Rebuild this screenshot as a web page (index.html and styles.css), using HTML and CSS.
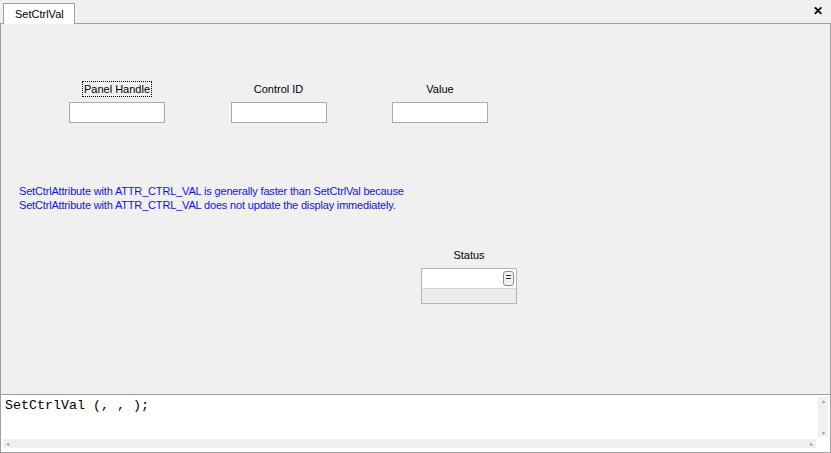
FILE: index.html
```html
<!DOCTYPE html>
<html lang="en">
<head>
    <meta charset="UTF-8">
    <title>SetCtrlVal</title>
    <link rel="stylesheet" href="styles.css">
</head>
<body>
    <div class="window">
        <div class="tabbar">
            <div class="tab">SetCtrlVal</div>
            <div class="close">&#x2715;</div>
        </div>

        <div class="panel">
            <div class="fields">
                <div class="field">
                    <span class="label focused">Panel Handle</span>
                    <div class="input"></div>
                </div>
                <div class="field">
                    <span class="label">Control ID</span>
                    <div class="input"></div>
                </div>
                <div class="field">
                    <span class="label">Value</span>
                    <div class="input"></div>
                </div>
            </div>

            <p class="note">SetCtrlAttribute with ATTR_CTRL_VAL is generally faster than SetCtrlVal because<br>SetCtrlAttribute with ATTR_CTRL_VAL does not update the display immediately.</p>

            <div class="status">
                <span class="label">Status</span>
                <div class="status-box">
                    <div class="status-top"><span class="eq">=</span></div>
                    <div class="status-bottom"></div>
                </div>
            </div>
        </div>

        <div class="editor">
            <div class="code">SetCtrlVal (, , );</div>
            <div class="vscroll"><span>&#9652;</span><span>&#9662;</span></div>
            <div class="hscroll"><span>&#9666;</span><span>&#9656;</span></div>
        </div>
    </div>
</body>
</html>
```

FILE: styles.css
```css
body { margin: 0; font-family: "Liberation Sans", Arial, sans-serif; font-size: 11px; color: #000; }
.window { width: 831px; height: 453px; display: flex; flex-direction: column; background: #f0f0f0; box-sizing: border-box; }

.tabbar { height: 23px; flex: none; display: flex; align-items: flex-end; border-bottom: 1px solid #a0a0a0; padding-left: 3px; position: relative; background: #f0f0f0; }
.tab { height: 20px; line-height: 20px; padding: 0 10px 0 11px; background: #fff; border: 1px solid #a0a0a0; border-bottom: none; margin-bottom: -1px; font-size: 11px; }
.close { position: absolute; right: 8px; top: 4px; font-size: 12px; font-weight: bold; line-height: 14px; }

.panel { flex: 1; border-left: 1px solid #a0a0a0; border-right: 1px solid #a0a0a0; padding: 57px 0 0 68px; }
.fields { display: flex; gap: 65.5px; }
.field { width: 96px; display: flex; flex-direction: column; align-items: center; gap: 5px; }
.label { line-height: 14px; padding: 0 1px; border: 1px dotted transparent; }
.label.focused { border-color: #000; }
.input { width: 96px; height: 21px; box-sizing: border-box; background: #fff; border: 1px solid #a9a9a9; }

.note { margin: 61px 0 0 -50px; color: #1010ee; line-height: 14px; letter-spacing: -0.17px; }

.status { width: 96px; margin: 35px 0 0 352px; display: flex; flex-direction: column; align-items: center; gap: 5px; }
.status-box { width: 96px; height: 36px; box-sizing: border-box; border: 1px solid #b4b4b4; display: flex; flex-direction: column; }
.status-top { height: 19px; background: #fff; display: flex; justify-content: flex-end; align-items: center; padding-right: 2px; border-bottom: 1px solid #d4d4d4; }
.eq { width: 11px; height: 15px; box-sizing: border-box; border: 1px solid #8a8a8a; border-radius: 3px; background: #f2f2f2; font-size: 10px; line-height: 12px; text-align: center; color: #222; }
.status-bottom { flex: 1; background: #ececec; }

.editor { height: 59px; flex: none; background: #fff; border: 1px solid #a0a0a0; position: relative; box-sizing: border-box; }
.code { font-family: "Liberation Mono", "Courier New", monospace; font-size: 13.33px; line-height: 16px; padding: 3px 0 0 4px; }
.vscroll { position: absolute; right: 2px; top: 2px; width: 10px; height: 40px; background: #f0f0f0; display: flex; flex-direction: column; justify-content: space-between; align-items: center; font-size: 6px; color: #999; line-height: 8px; }
.hscroll { position: absolute; left: 2px; right: 14px; bottom: 4px; height: 9px; background: #f0f0f0; display: flex; justify-content: space-between; align-items: center; font-size: 6px; color: #999; padding: 0 3px; }
```
